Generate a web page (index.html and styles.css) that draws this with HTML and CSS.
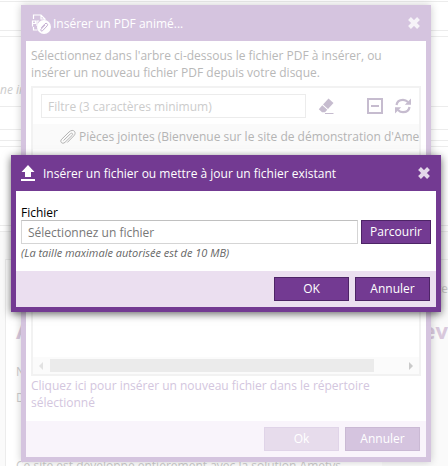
FILE: index.html
```
<!DOCTYPE html>
<html lang="fr">
<head>
  <meta charset="UTF-8">
  <meta name="viewport" content="width=device-width, initial-scale=1.0">
  <title>Insérer un PDF animé</title>
  <link rel="stylesheet" href="styles.css">
</head>
<body>
  <!-- Page behind the windows -->
  <div class="page">
    <div class="strip strip-top"></div>
    <div class="strip strip-menu"></div>
    <div class="strip strip-gap"></div>
    <div class="strip strip-intro"><em>ne in</em></div>
    <div class="strip strip-tools"></div>
    <div class="strip strip-line"></div>
    <div class="strip strip-gap"></div>
    <div class="strip strip-zone"></div>
    <div class="strip strip-gap"></div>
    <div class="article">
      <div class="article-box">
        <p class="article-more">nte</p>
        <h2 class="article-title"><span>A</span><span>ev</span></h2>
        <p>N</p>
        <p>D</p>
        <p class="article-foot">Ce site est développé entièrement avec la solution Ametys</p>
      </div>
    </div>
  </div>

  <!-- PDF window -->
  <div class="window window-back">
    <div class="window-header">
      <svg class="icon-pdf" width="20" height="24" viewBox="0 0 20 24">
        <path d="M2.500 8V4h7.500l4 4v1M10 4v4h4M2.500 16v3h4" fill="none" stroke="#fff" stroke-width="1.200"/>
        <path d="M1.500 9.500v6M1.500 10h3v2.500h-3M6 9.500v5.500M6 10h2" fill="none" stroke="#fff" stroke-width="1.200"/>
        <circle cx="13" cy="16" r="7" fill="#fff"/>
        <path d="M10.200 16.800l3.800-4a1.400 1.400 0 0 1 2.200 2l-4.600 4.900a1 1 0 0 1-1.600-1.400l4.100-4.300" fill="none" stroke="#c4aed2" stroke-width="1"/>
      </svg>
      <span class="window-title">Insérer un PDF animé...</span>
      <button class="close" type="button" aria-label="Fermer">
        <svg width="12" height="12" viewBox="0 0 12 12"><path d="M1.500 1.500l9 9M10.500 1.500l-9 9" stroke="currentColor" stroke-width="4"/></svg>
      </button>
    </div>
    <div class="window-body">
      <p class="intro">Sélectionnez dans l'arbre ci-dessous le fichier PDF à insérer, ou insérer un nouveau fichier PDF depuis votre disque.</p>
      <div class="tree">
        <div class="toolbar">
          <input type="text" class="filter" placeholder="Filtre (3 caractères minimum)" aria-label="Filtre">
          <button class="tool" type="button" aria-label="Effacer">
            <svg width="16" height="16" viewBox="0 0 16 16"><path d="M10.500 0.500l5 4.500-5.500 6-5-4.500z" fill="currentColor"/><path d="M4.300 7.200l5 4.500-2.300 2.600H4L0.800 11.300z" fill="currentColor"/><path d="M7 15.500h8.500" stroke="currentColor"/></svg>
          </button>
          <button class="tool tool-collapse" type="button" aria-label="Tout replier">
            <svg width="16" height="16" viewBox="0 0 16 16"><rect x="1" y="1" width="14" height="14" fill="none" stroke="currentColor" stroke-width="2"/><path d="M4 8h8" stroke="currentColor" stroke-width="2"/></svg>
          </button>
          <button class="tool" type="button" aria-label="Rafraîchir">
            <svg width="16" height="16" viewBox="0 0 16 16"><path d="M1.500 7C2 3.500 4.800 1.800 8 1.800c2 0 3.600.8 5 2.200M14.500 9c-.5 3.500-3.300 5.200-6.500 5.200-2 0-3.600-.8-5-2.200" fill="none" stroke="currentColor" stroke-width="2.200"/><path d="M16 0.500v6.200H9.800zM0 15.500V9.300h6.200z" fill="currentColor"/></svg>
          </button>
        </div>
        <div class="tree-row">
          <svg width="18" height="16" viewBox="0 0 18 16"><path d="M4.500 11.500l7-6.800c1.400-1.300 3 .3 1.700 1.600l-7.200 7C3.500 15.800.200 12.700 2.700 10.200l7.300-7.200c4-3.900 8.300.2 4.800 3.900l-6.500 6.600" fill="none" stroke="currentColor" stroke-width="1"/></svg>
          <span>Pièces jointes (Bienvenue sur le site de démonstration d'Ametys)</span>
        </div>
        <div class="tree-space"></div>
        <div class="scroll">
          <svg width="4" height="8" viewBox="0 0 4 8"><path d="M4 0v8L0 4z" fill="#e2e2e2"/></svg>
          <div class="scroll-track"><div class="scroll-thumb"></div></div>
          <svg width="4" height="8" viewBox="0 0 4 8"><path d="M0 0v8l4-4z" fill="#cacaca"/></svg>
        </div>
      </div>
      <a class="add-link" href="#">Cliquez ici pour insérer un nouveau fichier dans le répertoire sélectionné</a>
    </div>
    <div class="window-footer">
      <button class="btn" type="button" disabled>Ok</button>
      <button class="btn" type="button">Annuler</button>
    </div>
  </div>

  <!-- Upload window -->
  <form class="window window-front">
    <div class="window-header">
      <svg class="icon-upload" width="14" height="16" viewBox="0 0 14 16"><path d="M7 0l6.500 7H10v5H4V7H0.500z" fill="#fff"/><path d="M0 14h14v2H0z" fill="#fff"/></svg>
      <span class="window-title">Insérer un fichier ou mettre à jour un fichier existant</span>
      <button class="close" type="button" aria-label="Fermer">
        <svg width="12" height="12" viewBox="0 0 12 12"><path d="M1.500 1.500l9 9M10.500 1.500l-9 9" stroke="currentColor" stroke-width="4"/></svg>
      </button>
    </div>
    <div class="window-body">
      <label for="file">Fichier</label>
      <div class="file-row">
        <input type="text" id="file" placeholder="Sélectionnez un fichier" readonly>
        <button class="btn btn-browse" type="button">Parcourir</button>
      </div>
      <p class="hint">(La taille maximale autorisée est de 10 MB)</p>
    </div>
    <div class="window-footer">
      <button class="btn" type="button">OK</button>
      <button class="btn" type="button">Annuler</button>
    </div>
  </form>
</body>
</html>
```
FILE: styles.css
```
* {
  box-sizing: border-box;
}
body {
  margin: 0;
  background-color: #fff;
  font-family: "Open Sans", sans-serif;
  font-size: 12px;
  line-height: 17px;
}
p, h2 {
  margin: 0;
}
button, input {
  font-family: inherit;
  font-size: 12px;
}

/* page */
.page {
  height: 100vh;
  overflow: hidden;
  display: flex;
  flex-direction: column;
  color: #ccc;
}
.strip {
  flex: none;
  height: 6px;
  border-bottom: 1px solid #ececec;
}
.strip-top {
  height: 2px;
}
.strip-menu {
  height: 29px;
}
.strip-intro {
  height: 70px;
  padding-top: 44px;
}
.strip-tools {
  height: 23px;
}
.strip-line {
  height: 11px;
}
.strip-zone {
  height: 79px;
}
.article {
  flex: 1;
  padding: 27px 0 0 5px;
  background-color: #fafafa;
}
.article-box {
  padding: 20px 0 0 10px;
  border: 1px solid #ececec;
  border-right: none;
  background: linear-gradient(to right, #fff 85%, #fafafa 85%);
  display: flex;
  flex-direction: column;
  gap: 9px;
}
.article-more {
  text-align: right;
}
.article-title {
  display: flex;
  justify-content: space-between;
  padding: 8px 0;
  color: #d8c8dc;
  font-size: 22px;
  line-height: 32px;
}
.article-foot {
  margin-top: 42px;
}

/* windows */
.window {
  --main: #733a92;
  --dark: #4d2466;
  --foot: #ebdff0;
  position: absolute;
  border: 5px solid var(--main);
  border-top: none;
  background-color: #fff;
}
.window-back {
  --main: #d5c4df;
  --dark: #cab9d4;
  --foot: #f9f4fb;
  top: 5px;
  left: 21px;
  right: 17px;
  color: #b8b8b8;
  box-shadow: 0 0 8px rgba(0, 0, 0, 0.2);
}
.window-front {
  top: 155px;
  left: 11px;
  right: 7px;
  color: #000;
  box-shadow: 0 2px 8px rgba(0, 0, 0, 0.6);
}
.window-header {
  display: flex;
  align-items: center;
  height: 36px;
  padding: 0 6px 0 5px;
  background-color: var(--main);
  color: #fff;
}
.window-title {
  flex: 1;
}
.icon-pdf {
  margin-right: 2px;
}
.icon-upload {
  margin-right: 8px;
}
.close {
  display: flex;
  padding: 0;
  border: none;
  background: none;
  color: #fff;
  opacity: 0.8;
}
.window-body {
  padding: 5px;
}
.window-footer {
  display: flex;
  justify-content: flex-end;
  gap: 6px;
  padding: 6px;
  background-color: var(--foot);
}
.btn {
  width: 75px;
  height: 24px;
  padding: 0;
  border: 1px solid var(--dark);
  background-color: var(--main);
  color: #fff;
  line-height: 20px;
}
.btn:disabled {
  border-color: #e0d4e8;
  background-color: #e7dcec;
}

/* back window */
.window-back .window-body {
  height: 380px;
}
.intro {
  padding: 1px 0 5px;
}
.tree {
  height: 290px;
  display: flex;
  flex-direction: column;
  border: 2px solid #f2f2f2;
}
.toolbar {
  display: flex;
  align-items: center;
  padding: 6px 8px;
}
.filter {
  flex: 1;
  min-width: 0;
  height: 24px;
  margin-right: 12px;
  padding: 0 6px;
  border: 1px solid #ececec;
}
.filter::placeholder {
  color: #ccc;
}
.tool {
  display: flex;
  padding: 0;
  border: none;
  background: none;
  color: #c6bccf;
}
.tool-collapse {
  margin: 0 12px 0 33px;
}
.tree-row {
  display: flex;
  align-items: center;
  gap: 2px;
  height: 25px;
  padding-left: 26px;
  overflow: hidden;
  background-color: #fafafa;
  color: #b4b4b4;
  white-space: nowrap;
}
.tree-row svg {
  flex: none;
}
.tree-space {
  flex: 1;
}
.scroll {
  display: flex;
  align-items: center;
  gap: 7px;
  height: 17px;
  padding: 0 6px;
  background-color: #fbfbfb;
}
.scroll-track {
  flex: 1;
}
.scroll-thumb {
  width: 92%;
  height: 13px;
  background-color: #ebebeb;
}
.add-link {
  display: block;
  padding-top: 1px;
  color: #d3c6de;
  text-decoration: none;
}

/* front window */
.window-front .window-body {
  height: 80px;
  padding-top: 13px;
}
.window-front label {
  display: block;
  height: 16px;
}
.file-row {
  display: flex;
  gap: 3px;
}
.file-row input {
  flex: 1;
  min-width: 0;
  height: 24px;
  padding: 0 6px;
  border: 1px solid #d5d5d5;
  border-top-color: #c0c0c0;
}
.file-row input::placeholder {
  color: #777;
}
.btn-browse {
  width: 70px;
}
.hint {
  color: #666;
  font-size: 11px;
  font-style: italic;
}
```
